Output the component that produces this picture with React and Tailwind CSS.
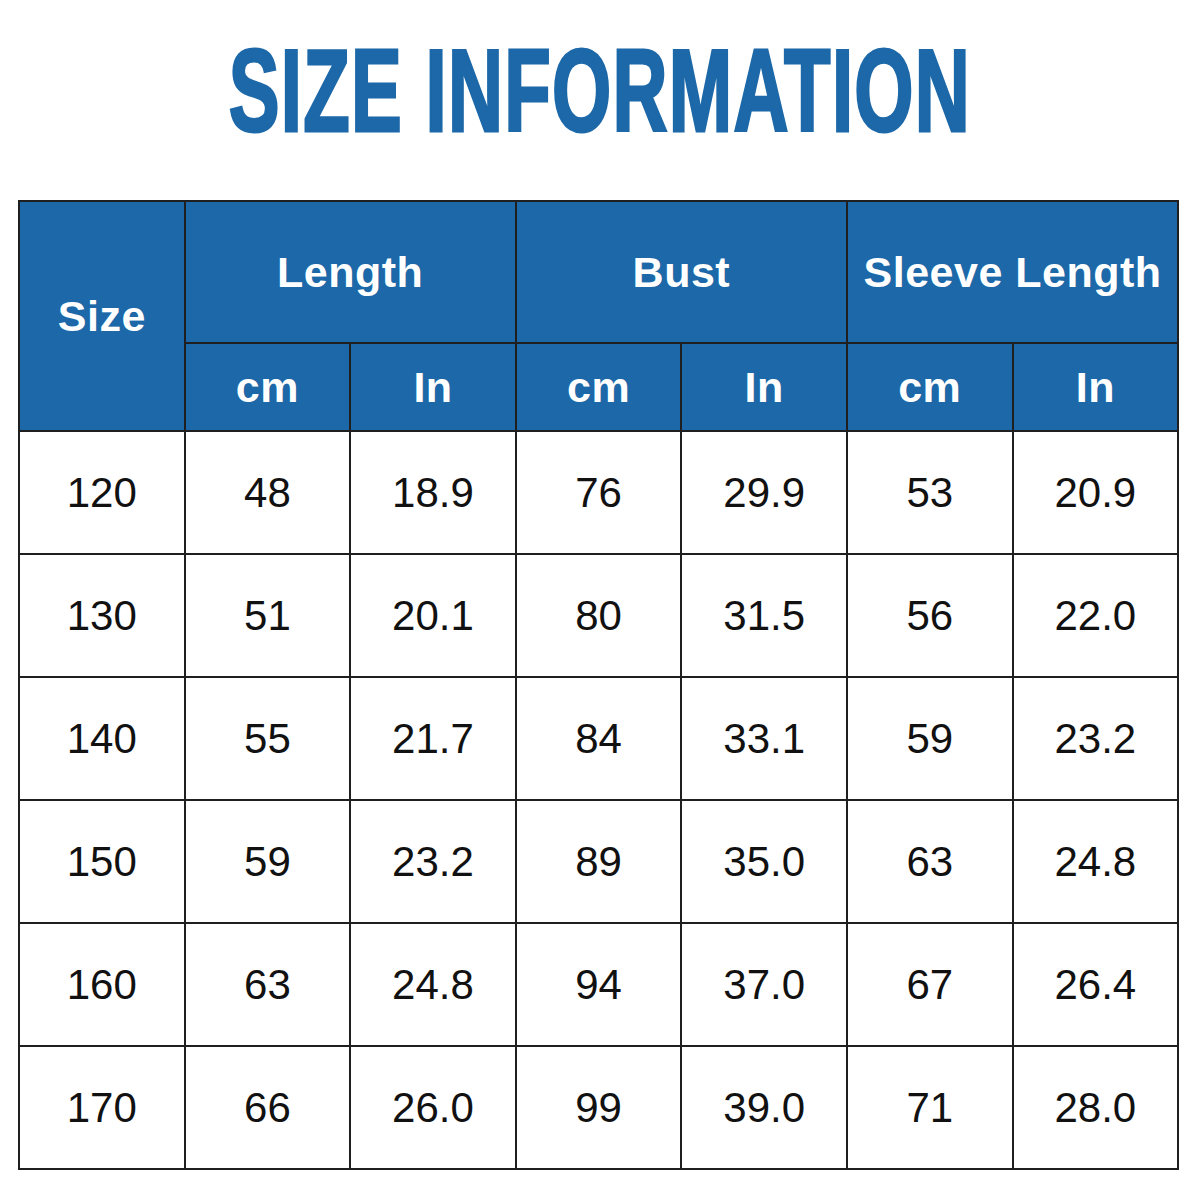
import React from 'react';

const rows = [
  ['120', '48', '18.9', '76', '29.9', '53', '20.9'],
  ['130', '51', '20.1', '80', '31.5', '56', '22.0'],
  ['140', '55', '21.7', '84', '33.1', '59', '23.2'],
  ['150', '59', '23.2', '89', '35.0', '63', '24.8'],
  ['160', '63', '24.8', '94', '37.0', '67', '26.4'],
  ['170', '66', '26.0', '99', '39.0', '71', '28.0'],
];

const th = 'border-2 border-[#1f1f1f] bg-[#1c68a8] text-white font-bold text-[43px] tracking-[0.5px] text-center align-middle p-0';
const td = 'border-2 border-[#1f1f1f] text-[#111] text-[42px] text-center align-middle p-0 h-[123px]';

export default function App() {
  return (
    <div className="w-[1200px] h-[1200px] bg-white overflow-hidden" style={{ fontFamily: '"Liberation Sans", Arial, sans-serif' }}>
      {/* Title */}
      <div className="pt-[33px] flex justify-center">
        <h1 className="text-[116px] leading-none font-bold text-[#1c68a8] tracking-[2px] scale-x-[0.656] origin-center whitespace-nowrap [-webkit-text-stroke:3px_#1c68a8]">
          SIZE INFORMATION
        </h1>
      </div>

      {/* Size table */}
      <table className="mt-[51px] ml-[18px] w-[1159px] table-fixed border-collapse">
        <colgroup>
          {[0, 1, 2, 3, 4, 5, 6].map((i) => (
            <col key={i} className="w-[165.6px]" />
          ))}
        </colgroup>
        <thead>
          <tr className="h-[142px]">
            <th rowSpan={2} className={th}>Size</th>
            <th colSpan={2} className={th}>Length</th>
            <th colSpan={2} className={th}>Bust</th>
            <th colSpan={2} className={`${th} whitespace-nowrap`}>Sleeve Length</th>
          </tr>
          <tr className="h-[88px]">
            <th className={th}>cm</th>
            <th className={th}>In</th>
            <th className={th}>cm</th>
            <th className={th}>In</th>
            <th className={th}>cm</th>
            <th className={th}>In</th>
          </tr>
        </thead>
        <tbody>
          {rows.map((r) => (
            <tr key={r[0]}>
              {r.map((v, i) => (
                <td key={i} className={td}>{v}</td>
              ))}
            </tr>
          ))}
        </tbody>
      </table>
    </div>
  );
}
